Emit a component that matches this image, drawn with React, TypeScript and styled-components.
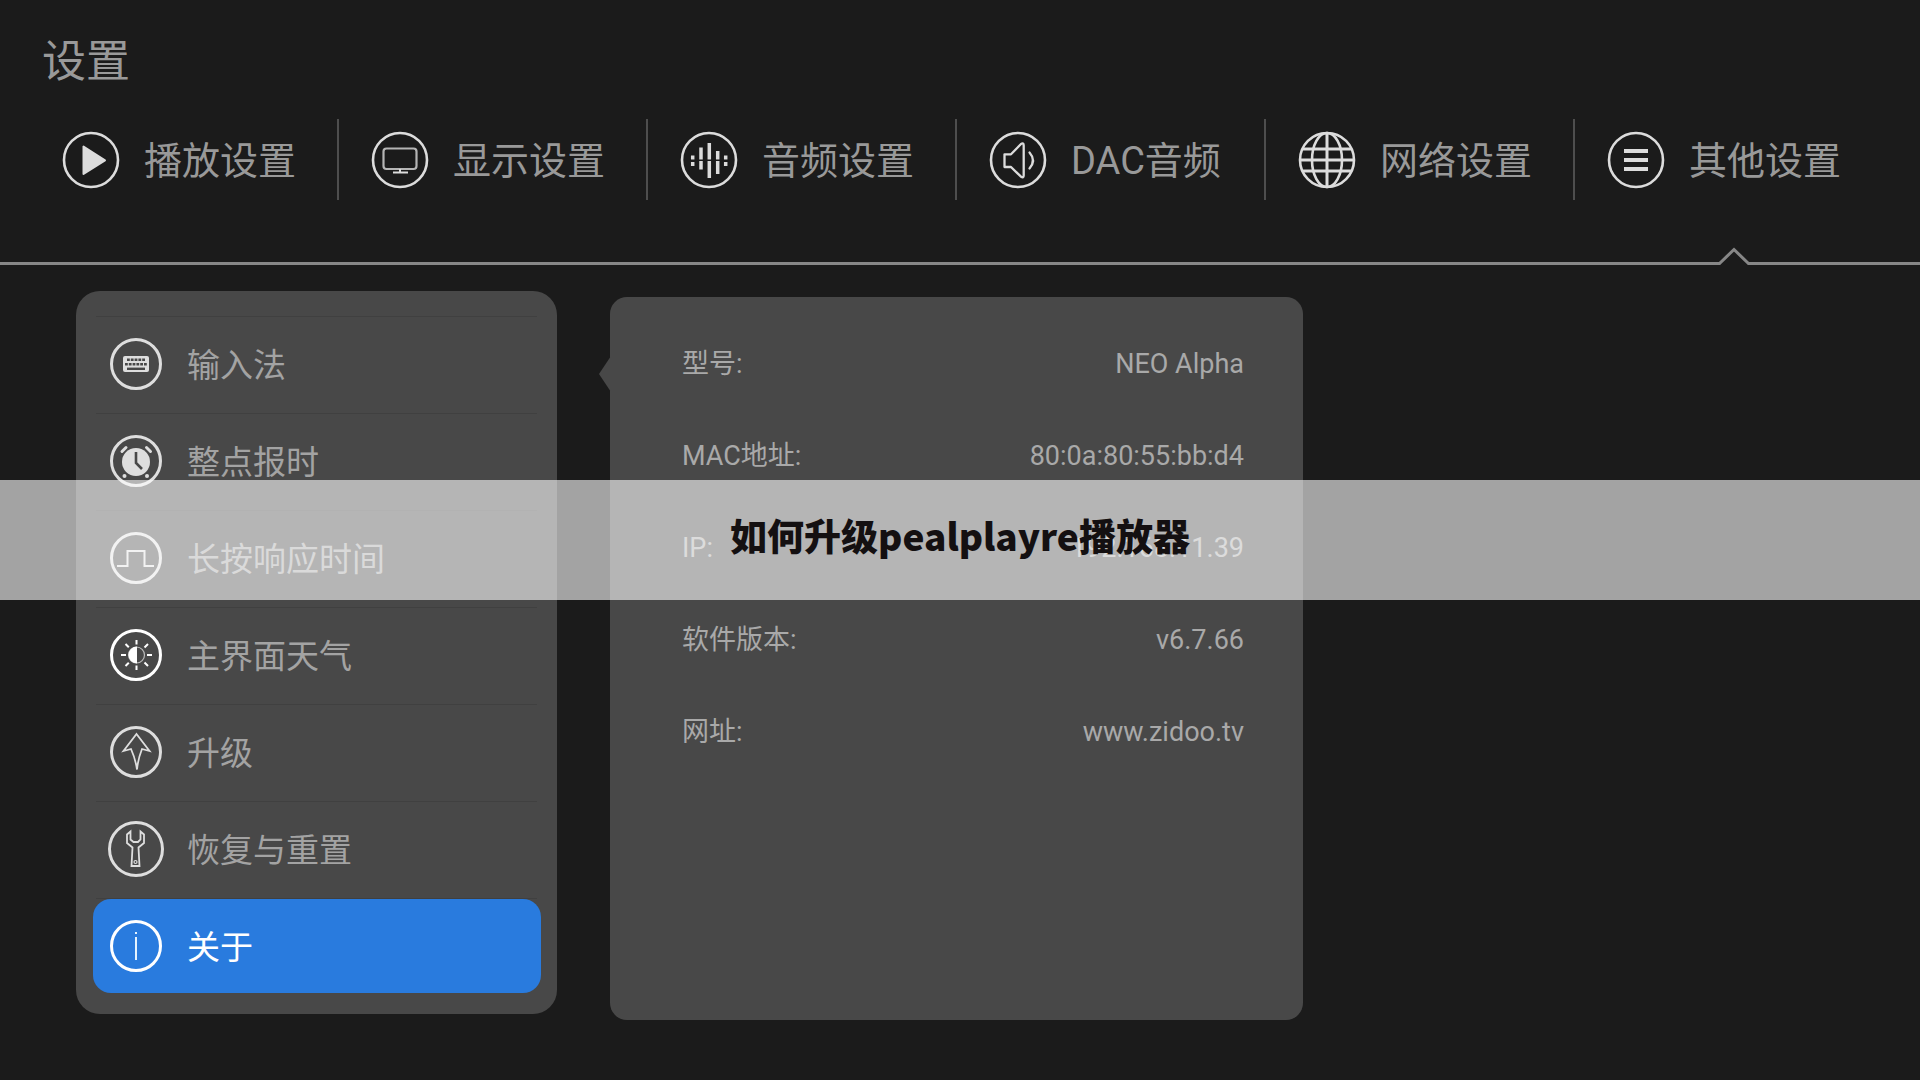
import React from "react";
import styled, { createGlobalStyle, css } from "styled-components";

const GlobalStyle = createGlobalStyle`
  * { box-sizing: border-box; }
  body {
    margin: 0;
    background: #1b1b1b;
    font-family: Roboto, "Noto Sans CJK SC", sans-serif;
    color: #999;
  }
`;

const Page = styled.div`
  position: relative;
  min-height: 100vh;
  overflow: hidden;
`;

const Title = styled.h1`
  margin: 0;
  padding: 30px 42px 0;
  font-size: 44px;
  line-height: 64px;
  font-weight: 400;
  color: #999;
`;

const Tabs = styled.nav`
  display: grid;
  grid-template-columns: repeat(6, 1fr);
  padding: 25px 36px 0 30px;
`;

const Tab = styled.button`
  display: flex;
  align-items: center;
  gap: 24px;
  height: 81px;
  padding: 0 0 0 32px;
  border: 0;
  border-right: 2px solid #4e4e4e;
  background: none;
  font: inherit;
  font-size: 38px;
  line-height: 56px;
  color: #999;
  white-space: nowrap;
  &:last-child { border-right-color: transparent; }
`;

const Label = styled.span`
  padding-top: 3px;
`;

const TabIcon = styled.svg`
  flex: none;
  width: 58px;
  height: 58px;
  fill: none;
  stroke: #dcdcdc;
  stroke-width: 2.6;
`;

const Rule = styled.div`
  display: flex;
  align-items: flex-end;
  height: 18px;
  margin-top: 47px;
`;

const RuleLine = styled.span<{ $tail?: boolean }>`
  height: 3px;
  background: #878787;
  ${(p) => (p.$tail ? css`width: 170px;` : css`flex: 1;`)}
`;

const RuleNotch = styled.svg`
  width: 32px;
  height: 18px;
  fill: none;
  stroke: #878787;
  stroke-width: 3;
`;

const Content = styled.main`
  display: flex;
  align-items: flex-start;
  gap: 53px;
  padding: 26px 76px 60px;
`;

const Menu = styled.ul`
  flex: none;
  width: 481px;
  margin: 0;
  padding: 25px 16px 19px;
  list-style: none;
  border-radius: 24px;
  background: #484848;
`;

const MenuItem = styled.li`
  height: 97px;
  padding: 1px 0 0 1px;
  background: linear-gradient(#404040, #404040) 4px 0 / calc(100% - 8px) 1px no-repeat;
`;

const MenuButton = styled.button<{ $active?: boolean }>`
  display: flex;
  align-items: center;
  gap: 22px;
  width: 100%;
  height: 94px;
  padding: 0 14px;
  border: 0;
  border-radius: 18px;
  background: ${(p) => (p.$active ? "#297bde" : "none")};
  font: inherit;
  font-size: 33px;
  line-height: 48px;
  color: ${(p) => (p.$active ? "#fff" : "#a3a3a3")};
`;

const MenuIcon = styled.svg<{ $bright?: boolean }>`
  flex: none;
  width: 58px;
  height: 58px;
  fill: none;
  stroke: ${(p) => (p.$bright ? "#fff" : "#dedede")};
  stroke-width: 3;
`;

const Details = styled.section`
  position: relative;
  flex: 0 1 693px;
  min-height: 723px;
  margin-top: 6px;
  padding: 47px 59px 0 72px;
  border-radius: 17px;
  background: #484848;
  &::before {
    content: "";
    position: absolute;
    left: -11px;
    top: 59px;
    width: 12px;
    height: 36px;
    background: #484848;
    clip-path: polygon(100% 0, 0 50%, 100% 100%);
  }
`;

const InfoList = styled.dl`
  display: grid;
  gap: 52px;
  margin: 0;
  font-size: 27px;
  line-height: 40px;
  color: #a9a9a9;
`;

const InfoRow = styled.div`
  display: flex;
  justify-content: space-between;
`;

const InfoText = styled.dt`
  margin: 0;
`;

const Banner = styled.div`
  position: absolute;
  top: 480px;
  left: 0;
  right: 0;
  display: flex;
  align-items: center;
  justify-content: center;
  height: 120px;
  padding-bottom: 10px;
  background: rgba(255, 255, 255, 0.6);
  font-family: "Noto Sans CJK SC", sans-serif;
  font-size: 37px;
  line-height: 54px;
  font-weight: 900;
  color: #141011;
`;

const ring = <circle cx="29" cy="29" r="27" />;

const tabs = [
  {
    label: "播放设置",
    icon: (
      <>
        {ring}
        <path d="M21.500 15.500v27.500L43 29.300Z" fill="#dcdcdc" strokeLinejoin="round" strokeWidth="2" />
      </>
    ),
  },
  {
    label: "显示设置",
    icon: (
      <>
        {ring}
        <rect x="12.500" y="17.500" width="33" height="20.500" rx="3" strokeWidth="2.200" stroke="#b5b5b5" />
        <path d="M29 38v3M22 41.500h15" strokeWidth="2" />
      </>
    ),
  },
  {
    label: "音频设置",
    icon: (
      <>
        {ring}
        <path
          d="M12.700 24.500v4M12.700 31v4M21 16.500v12M21 30v8.500M29.300 12v16.500M29.300 30v17M37.700 20v8.500M37.700 30v13M45.700 24.500v4M45.700 31v4"
          strokeWidth="3.500"
        />
      </>
    ),
  },
  {
    label: "DAC音频",
    icon: (
      <>
        {ring}
        <path d="M15.500 23.300h6.500L32 13q2.700-1.500 2.700 1.500v30q0 2.700-2.700 1.200L22 36h-6.500Z" strokeWidth="2.300" strokeLinejoin="round" />
        <path d="M40.500 21.500q7 8 0 16" strokeWidth="2.300" strokeLinecap="round" />
      </>
    ),
  },
  {
    label: "网络设置",
    icon: (
      <>
        {ring}
        <ellipse cx="29" cy="29" rx="15" ry="27" />
        <path d="M29 2v54M2 29h54M5 18h48M5 40h48" strokeWidth="3" />
      </>
    ),
  },
  {
    label: "其他设置",
    icon: (
      <>
        {ring}
        <path d="M17 20h24M17 29h24M17 38h24" strokeWidth="4" />
      </>
    ),
  },
];

const menuRing = <circle cx="29" cy="29" r="24.500" />;

const menu = [
  {
    label: "输入法",
    icon: (
      <>
        {menuRing}
        <rect x="16" y="21" width="26" height="16" rx="2" fill="#dedede" stroke="none" />
        <path d="M20 24.800h18" stroke="#484848" strokeWidth="2.600" strokeDasharray="2.800 1" />
        <path d="M18 29.200h22" stroke="#484848" strokeWidth="2.600" strokeDasharray="2.800 1" />
        <path d="M20 33.800h18" stroke="#484848" strokeWidth="2.400" />
      </>
    ),
  },
  {
    label: "整点报时",
    icon: (
      <>
        {menuRing}
        <circle cx="29" cy="30" r="14" fill="#dedede" stroke="none" />
        <path d="M29 20v11l6 6" stroke="#484848" strokeWidth="2.600" />
        <path d="M15 19.500l4-4M39.500 15.500l4 4" strokeLinecap="round" />
        <circle cx="17.500" cy="44" r="2" fill="#dedede" stroke="none" />
        <circle cx="40" cy="44" r="2" fill="#dedede" stroke="none" />
      </>
    ),
  },
  {
    label: "长按响应时间",
    icon: (
      <>
        {menuRing}
        <path d="M10 37h10.500V22H37.500v15H47" strokeWidth="2" />
      </>
    ),
  },
  {
    label: "主界面天气",
    bright: true,
    icon: (
      <>
        {menuRing}
        <circle cx="29.500" cy="29" r="8" strokeWidth="1.200" stroke="#bbb" />
        <path d="M30 20.500a8.500 8.500 0 0 0 0 17Z" fill="#fff" stroke="none" />
        <path
          d="M29.500 14v4.500M29.500 39.500V44M14 29h5M40 29h5M18.500 18l3.300 3.300M37.500 36.500l3.500 3.500M18.500 40l3.300-3.300M37.500 21.500L41 18"
          strokeWidth="2"
        />
      </>
    ),
  },
  {
    label: "升级",
    icon: (
      <>
        {menuRing}
        <path d="M29.500 11L42.500 28l-7.500-2Q31 36 30 46.500Q28.500 36 24 26l-7.500 2Z" strokeWidth="1.800" />
      </>
    ),
  },
  {
    label: "恢复与重置",
    icon: (
      <>
        <circle cx="29" cy="29" r="26.500" />
        <path
          d="M23.500 11.500L20 14.500v8.500l5.500 4.500L24.500 46h8L31.500 27.500l5.500-4.500v-8.500L33.500 11.500v8L31 22h-4.500l-3-2.500Z"
          strokeWidth="1.800"
        />
        <circle cx="28.500" cy="42" r="1.500" strokeWidth="1.200" />
      </>
    ),
  },
  {
    label: "关于",
    bright: true,
    active: true,
    icon: (
      <>
        {menuRing}
        <path d="M29 20v23M29 15v2" strokeWidth="2" stroke="#e4f3ff" />
      </>
    ),
  },
];

const info = [
  ["型号:", "NEO Alpha"],
  ["MAC地址:", "80:0a:80:55:bb:d4"],
  ["IP:", "192.168.11.39"],
  ["软件版本:", "v6.7.66"],
  ["网址:", "www.zidoo.tv"],
];

export default function App() {
  return (
    <Page>
      <GlobalStyle />
      <Title>设置</Title>
      <Tabs>
        {tabs.map((t) => (
          <Tab key={t.label} type="button">
            <TabIcon viewBox="0 0 58 58" aria-hidden="true">{t.icon}</TabIcon>
            <Label>{t.label}</Label>
          </Tab>
        ))}
      </Tabs>
      <Rule>
        <RuleLine />
        <RuleNotch viewBox="0 0 32 18" aria-hidden="true">
          <path d="M0 16.500h1.500L16 2.500L30.500 16.500H32" />
        </RuleNotch>
        <RuleLine $tail />
      </Rule>
      <Content>
        <Menu>
          {menu.map((m) => (
            <MenuItem key={m.label}>
              <MenuButton type="button" $active={m.active}>
                <MenuIcon viewBox="0 0 58 58" $bright={m.bright} aria-hidden="true">{m.icon}</MenuIcon>
                <Label>{m.label}</Label>
              </MenuButton>
            </MenuItem>
          ))}
        </Menu>
        <Details>
          <InfoList>
            {info.map(([k, v]) => (
              <InfoRow key={k}>
                <InfoText>{k}</InfoText>
                <InfoText as="dd">{v}</InfoText>
              </InfoRow>
            ))}
          </InfoList>
        </Details>
      </Content>
      <Banner>如何升级pealplayre播放器</Banner>
    </Page>
  );
}
